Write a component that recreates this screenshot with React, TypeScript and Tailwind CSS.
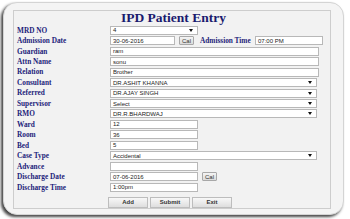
import React from "react"

const labelCls = "w-[93px] shrink-0 whitespace-nowrap text-[7.3px] font-bold text-[#1d1d7a] leading-none"
const inputCls = "h-[9px] border border-[#b8b8b8] bg-white px-[2px] text-[6px] leading-none text-[#222] flex items-center"
const serif = "'Liberation Serif', 'Times New Roman', serif"
const sans = "'Liberation Sans', Arial, sans-serif"

function Arrow() {
    return (
        <svg width="4" height="3" viewBox="0 0 4 3" className="ml-auto mr-[2px]">
            <path d="M0 0 L4 0 L2 3 Z" fill="#111" />
        </svg>
    )
}

function Field({ value, w, select = false }: { value: string; w: string; select?: boolean }) {
    return (
        <div className={`${inputCls} ${w}`} style={{ fontFamily: sans }}>
            <span>{value}</span>
            {select && <Arrow />}
        </div>
    )
}

function CalButton() {
    return (
        <div
            className="ml-[4px] h-[9px] px-[2px] flex items-center border border-[#a8a8a8] rounded-[1px] bg-gradient-to-b from-[#f4f4f4] to-[#dcdcdc] text-[6px] leading-none text-[#333]"
            style={{ fontFamily: sans }}
        >
            Cal
        </div>
    )
}

function Row({ label, children }: { label: string; children: React.ReactNode }) {
    return (
        <div className="flex items-center h-[10.47px]">
            <div className={labelCls}>{label}</div>
            {children}
        </div>
    )
}

const W_FULL = "w-[209px]"
const W_SEL = "w-[207px]"
const W_SHORT = "w-[88px]"

export default function App() {
    return (
        <div className="w-[350px] h-[219px] bg-white pt-[2px] pl-[3px]" style={{ fontFamily: serif }}>
            <div className="w-[341px] h-[213px] rounded-[14px] bg-[#f4f4f4] border border-[#d4d4d4] shadow-[-2px_2px_3px_#444] pt-[7px] pl-[9px]">
                <div className="w-[318px] h-[199px] border border-[#cdcdcd] bg-[#f2f2f2] pl-[3px]">
                    <div className="h-[14px] flex items-center justify-center text-[13.5px] font-bold text-[#1a1a6e] leading-none" style={{ fontFamily: serif }}>
                        IPD Patient Entry
                    </div>
                    <div className="flex flex-col">
                        <Row label="MRD NO"><Field value="4" w={W_SHORT} select /></Row>
                        <Row label="Admission Date">
                            <Field value="30-06-2016" w="w-[65px]" />
                            <CalButton />
                            <div className="ml-[6px] w-[55px] whitespace-nowrap text-[7.3px] font-bold text-[#1d1d7a] leading-none">Admission Time</div>
                            <Field value="07:00 PM" w="w-[68px]" />
                        </Row>
                        <Row label="Guardian"><Field value="ram" w={W_FULL} /></Row>
                        <Row label="Attn Name"><Field value="sonu" w={W_FULL} /></Row>
                        <Row label="Relation"><Field value="Brother" w={W_FULL} /></Row>
                        <Row label="Consultant"><Field value="DR.ASHIT KHANNA" w={W_SEL} select /></Row>
                        <Row label="Referred"><Field value="DR.AJAY SINGH" w={W_SEL} select /></Row>
                        <Row label="Supervisor"><Field value="Select" w={W_SEL} select /></Row>
                        <Row label="RMO"><Field value="DR.R.BHARDWAJ" w={W_SEL} select /></Row>
                        <Row label="Ward"><Field value="12" w={W_SHORT} /></Row>
                        <Row label="Room"><Field value="36" w={W_SHORT} /></Row>
                        <Row label="Bed"><Field value="5" w={W_SHORT} /></Row>
                        <Row label="Case Type"><Field value="Accidental" w={W_SEL} select /></Row>
                        <Row label="Advance"><Field value="" w={W_SHORT} /></Row>
                        <Row label="Discharge Date">
                            <Field value="07-06-2016" w={W_SHORT} />
                            <CalButton />
                        </Row>
                        <Row label="Discharge Time"><Field value="1:00pm" w={W_SHORT} /></Row>
                    </div>
                    <div className="flex gap-[2px] pl-[91px] mt-[4px]" style={{ fontFamily: sans }}>
                        {["Add", "Submit", "Exit"].map(b => (
                            <div key={b} className="w-[40px] h-[11px] flex items-center justify-center border border-[#bdbdbd] bg-gradient-to-b from-[#f8f8f8] to-[#dedede] text-[6px] font-bold leading-none text-[#333]">
                                {b}
                            </div>
                        ))}
                    </div>
                </div>
            </div>
        </div>
    )
}
